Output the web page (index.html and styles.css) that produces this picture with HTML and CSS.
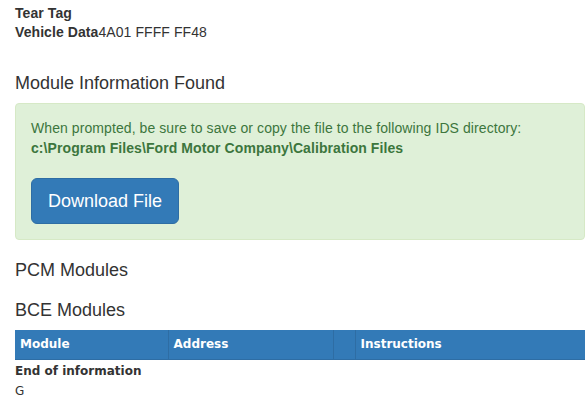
FILE: index.html
```html
<!DOCTYPE html>
<html>
<head>
<meta charset="utf-8">
<link rel="stylesheet" href="styles.css">
</head>
<body>
<div class="page">
  <div class="info">
    <div class="line"><b>Tear Tag</b></div>
    <div class="line"><b>Vehicle Data</b>4A01 FFFF FF48</div>
  </div>

  <h4 class="section-title first">Module Information Found</h4>
  <div class="alert">
    <p class="alert-text">When prompted, be sure to save or copy the file to the following IDS directory:<br><b>c:\Program Files\Ford Motor Company\Calibration Files</b></p>
    <button class="btn-download" type="button">Download File</button>
  </div>

  <h4 class="section-title pcm">PCM Modules</h4>
  <h4 class="section-title bce">BCE Modules</h4>

  <table class="modules">
    <thead>
      <tr>
        <th class="c-module">Module</th>
        <th class="c-address">Address</th>
        <th class="c-blank"></th>
        <th class="c-instr">Instructions</th>
      </tr>
    </thead>
  </table>
  <div class="end"><b>End of information</b></div>
  <div class="end-g">G</div>
</div>
</body>
</html>
```

FILE: styles.css
```css
html, body {
  margin: 0;
  padding: 0;
  background: #fff;
}
body {
  font-family: "Liberation Sans", Arial, sans-serif;
  font-size: 14px;
  line-height: 20px;
  letter-spacing: 0.08px;
  color: #333;
}
.page {
  padding: 3px 0 0 15px;
}
.info .line {
  height: 19px;
  line-height: 20px;
}
.section-title {
  font-family: "Liberation Sans", Arial, sans-serif;
  font-size: 18px;
  font-weight: normal;
  line-height: 20px;
  letter-spacing: 0;
  margin: 0;
  color: #333;
}
.section-title.first {
  margin-top: 32px;
}
.alert {
  margin-top: 10px;
  background: #dff0d8;
  border: 1px solid #d6e9c6;
  border-radius: 4px;
  padding: 14px 15px 15px;
  color: #3c763d;
}
.alert-text {
  margin: 0 0 20px 0;
}
.btn-download {
  display: block;
  font-family: "Liberation Sans", Arial, sans-serif;
  font-size: 18px;
  line-height: 24px;
  letter-spacing: 0;
  padding: 10px 16px;
  height: 46px;
  color: #fff;
  background: #337ab7;
  border: 1px solid #2e6da4;
  border-radius: 6px;
  cursor: pointer;
}
.section-title.pcm {
  margin-top: 20px;
}
.section-title.bce {
  margin-top: 20px;
}
.modules {
  margin-top: 10px;
  width: 570px;
  border-collapse: collapse;
  background: #337ab7;
}
.modules th {
  height: 29px;
  padding: 0 5px;
  text-align: left;
  vertical-align: middle;
  font-family: "DejaVu Sans", Verdana, sans-serif;
  font-size: 12px;
  font-weight: bold;
  letter-spacing: 0;
  color: #fff;
  border-left: 1px solid #2e6da4;
  border-bottom: 1px solid #2e6da4;
  box-sizing: border-box;
}
.modules th:first-child {
  border-left: none;
}
.c-module { width: 153px; }
.c-address { width: 165px; }
.c-blank { width: 22px; }
.end {
  font-family: "DejaVu Sans", Verdana, sans-serif;
  font-size: 12px;
  line-height: 20px;
  letter-spacing: 0;
  margin-top: 1px;
}
.end-g {
  font-family: "DejaVu Sans", Verdana, sans-serif;
  font-size: 12px;
  line-height: 20px;
  letter-spacing: 0;
}
```
